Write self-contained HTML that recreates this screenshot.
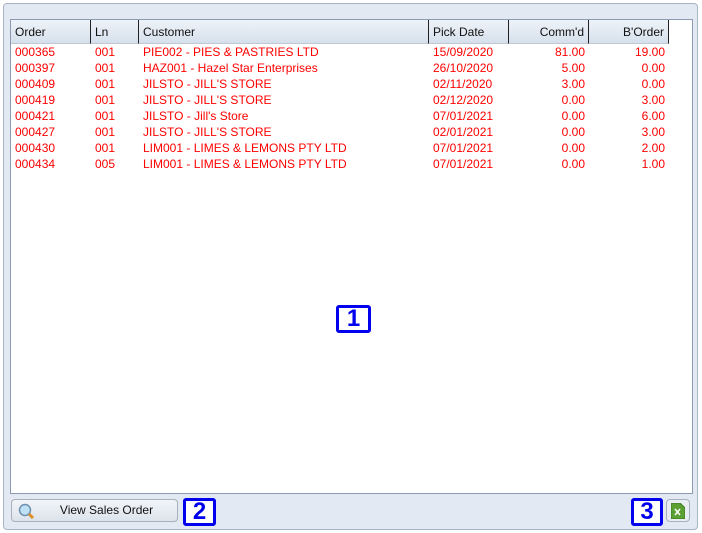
<html><head><style>
body{margin:0;width:702px;height:533px;background:#fff;font-family:"Liberation Sans",sans-serif;font-size:12px;position:relative;overflow:hidden}
.panel{position:absolute;left:3px;top:3px;width:693px;height:525px;border:1px solid #a8b4c4;border-radius:4px;background:#e3e9f2}
.tbl{position:absolute;left:10px;top:19px;width:681px;height:473px;border:1px solid #8a9ab0;background:#fff}
.hd{position:absolute;top:0;height:24px;background:linear-gradient(#eef3f9,#d6e0ec);border-bottom:1px solid #c0c8d4;line-height:24px;color:#111;box-sizing:border-box;padding:0 4px}
.c{position:absolute;height:16px;line-height:16px;color:#f00;padding:0 4px;box-sizing:border-box;white-space:nowrap}
.r{text-align:right}
.lbl{position:absolute;border:3px solid #0000ee;border-radius:3px;background:#fff;color:#0000ee;font-weight:bold;font-size:24px;text-align:center;box-sizing:border-box}
.btn{position:absolute;left:11px;top:499px;width:167px;height:23px;border:1px solid #a8b0bc;border-radius:4px;background:linear-gradient(#f2f5f9,#dde3eb);box-sizing:border-box;line-height:21px;padding-left:24px;text-align:center;color:#111}
</style></head><body>
<div class="panel"></div>
<div class="tbl">
<div class="hd" style="left:0;width:80px;border-right:1px solid #222">Order</div>
<div class="hd" style="left:80px;width:48px;border-right:1px solid #222">Ln</div>
<div class="hd" style="left:128px;width:290px;border-right:1px solid #222">Customer</div>
<div class="hd" style="left:418px;width:80px;border-right:1px solid #222">Pick Date</div>
<div class="hd r" style="left:498px;width:80px;border-right:1px solid #222">Comm'd</div>
<div class="hd r" style="left:578px;width:80px;border-right:1px solid #222">B'Order</div>
</div>
<div style="position:absolute;left:11px;top:44px">
<div class="c" style="left:0;top:0">000365</div><div class="c" style="left:80px;top:0">001</div><div class="c" style="left:128px;top:0">PIE002 - PIES &amp; PASTRIES LTD</div><div class="c" style="left:418px;top:0">15/09/2020</div><div class="c r" style="left:498px;top:0;width:80px">81.00</div><div class="c r" style="left:578px;top:0;width:80px">19.00</div>
<div class="c" style="left:0;top:16px">000397</div><div class="c" style="left:80px;top:16px">001</div><div class="c" style="left:128px;top:16px">HAZ001 - Hazel Star Enterprises</div><div class="c" style="left:418px;top:16px">26/10/2020</div><div class="c r" style="left:498px;top:16px;width:80px">5.00</div><div class="c r" style="left:578px;top:16px;width:80px">0.00</div>
<div class="c" style="left:0;top:32px">000409</div><div class="c" style="left:80px;top:32px">001</div><div class="c" style="left:128px;top:32px">JILSTO - JILL'S STORE</div><div class="c" style="left:418px;top:32px">02/11/2020</div><div class="c r" style="left:498px;top:32px;width:80px">3.00</div><div class="c r" style="left:578px;top:32px;width:80px">0.00</div>
<div class="c" style="left:0;top:48px">000419</div><div class="c" style="left:80px;top:48px">001</div><div class="c" style="left:128px;top:48px">JILSTO - JILL'S STORE</div><div class="c" style="left:418px;top:48px">02/12/2020</div><div class="c r" style="left:498px;top:48px;width:80px">0.00</div><div class="c r" style="left:578px;top:48px;width:80px">3.00</div>
<div class="c" style="left:0;top:64px">000421</div><div class="c" style="left:80px;top:64px">001</div><div class="c" style="left:128px;top:64px">JILSTO - Jill's Store</div><div class="c" style="left:418px;top:64px">07/01/2021</div><div class="c r" style="left:498px;top:64px;width:80px">0.00</div><div class="c r" style="left:578px;top:64px;width:80px">6.00</div>
<div class="c" style="left:0;top:80px">000427</div><div class="c" style="left:80px;top:80px">001</div><div class="c" style="left:128px;top:80px">JILSTO - JILL'S STORE</div><div class="c" style="left:418px;top:80px">02/01/2021</div><div class="c r" style="left:498px;top:80px;width:80px">0.00</div><div class="c r" style="left:578px;top:80px;width:80px">3.00</div>
<div class="c" style="left:0;top:96px">000430</div><div class="c" style="left:80px;top:96px">001</div><div class="c" style="left:128px;top:96px">LIM001 - LIMES &amp; LEMONS PTY LTD</div><div class="c" style="left:418px;top:96px">07/01/2021</div><div class="c r" style="left:498px;top:96px;width:80px">0.00</div><div class="c r" style="left:578px;top:96px;width:80px">2.00</div>
<div class="c" style="left:0;top:112px">000434</div><div class="c" style="left:80px;top:112px">005</div><div class="c" style="left:128px;top:112px">LIM001 - LIMES &amp; LEMONS PTY LTD</div><div class="c" style="left:418px;top:112px">07/01/2021</div><div class="c r" style="left:498px;top:112px;width:80px">0.00</div><div class="c r" style="left:578px;top:112px;width:80px">1.00</div>
</div>
<div class="lbl" style="left:336px;top:305px;width:35px;height:28px;line-height:22px">1</div>
<div class="btn"><svg width="16" height="16" style="position:absolute;left:6px;top:3px"><circle cx="7" cy="7" r="5.5" fill="#bfe0f5" stroke="#6a8fb0" stroke-width="1.5"/><path d="M11 11l4 4" stroke="#d9902a" stroke-width="3"/></svg>View Sales Order</div>
<div class="lbl" style="left:183px;top:498px;width:33px;height:28px;line-height:22px">2</div>
<div class="lbl" style="left:631px;top:498px;width:32px;height:28px;line-height:22px">3</div>
<div style="position:absolute;left:666px;top:499px;width:24px;height:23px;border:1px solid #a8b0bc;border-radius:4px;background:#e8edf3;box-sizing:border-box"><svg width="14" height="16" style="position:absolute;left:4px;top:3px"><path d="M0 0h9l5 5v11H0z" fill="#5aa032" stroke="#3c7a20"/><path d="M4 6l5 6M9 6l-5 6" stroke="#fff" stroke-width="1.5"/></svg></div>
</body></html>
